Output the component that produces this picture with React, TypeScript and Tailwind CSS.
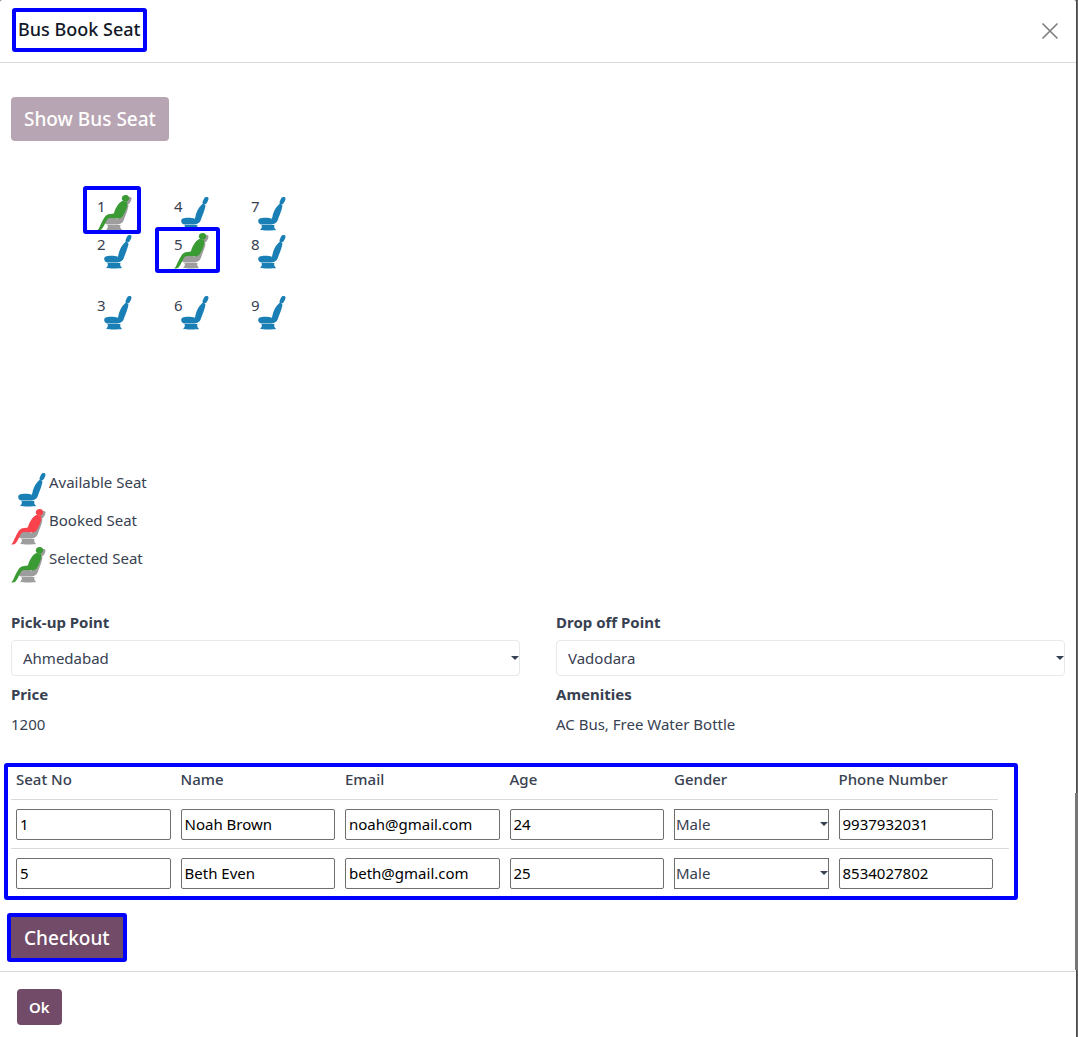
import type { ReactNode } from "react";

type SeatState = "available" | "booked" | "selected";

const passengerColor = { booked: "#f9424c", selected: "#3a9b35" };

function SeatIcon({ state }: { state: SeatState }) {
  const seat = state === "available" ? "#1a7fb5" : "#9d9d9d";
  return (
    <svg viewBox="0 0 36 36" className="size-9 shrink-0" aria-hidden="true">
      <g fill={seat}>
        <path d="M30.300 3.200C31.200 1.600 34.800 1.500 34.500 4c-.2 1.600-1.400 3.600-2.300 4.700-1 1.200-4 .5-3.700-1 .2-1.400 1.100-3.300 1.800-4.500z" />
        <path d="M27.900 9.500c.9-.9 3.500-.2 3.500 1.200 0 2.500-2.700 9.200-4.600 14.200-.8 2.200-2 3.500-4.200 3-2.100-.4-2.300-1.900-1.700-3.900.5-1.800.7-3.500 1.400-5.700 1.100-3.600 3.400-6.700 5.600-8.800z" />
        <path d="M7.200 25.500c.1-1.700 1.700-2.400 3.800-2.600 3.400-.3 7.300-.2 9.600.6.300 1.900 1.600 3.200 4 4.300-1.400 1.600-3.600 1.700-6 1.700h-7.600c-2.700 0-4-1.900-3.800-4z" />
        <path d="M10.500 30h13c-.9 2 .1 3.700 1.700 5-2.300.6-13.500.7-16.200 0 1.500-1.400 2.400-3 1.500-5z" />
      </g>
      {state !== "available" && (
        <g fill={passengerColor[state]}>
          <path d="M24.800 3.200C25 1 27-.1 29 .1c2.100.2 3.400 1.600 3.200 3.400-.2 2-1.700 3.300-3.600 3.200-2.100 0-4-1.400-3.800-3.500z" />
          <path d="M24.800 6.200c1.800-.9 5.400.3 5.600 2.300.3 3.300-2.800 9.900-4.900 13-1.100 1.600-3.300 2.100-5.600 1.800l-6.600-.3c-2.300.2-3.200 1.500-4.200 3.500-1.400 2.800-2.700 5.800-4.700 7.900-.9.900-3.500 1.400-4 .9 2.100-1.700 2.500-5 4.500-8.300 1.700-2.800 2.600-5.600 4.900-6.900 2.300-1.300 5-1 7-1.500 1.400-4.600 3.800-9.900 8-12.400z" />
        </g>
      )}
    </svg>
  );
}

/* Highlight frame drawn over the element it marks. */
function Frame({ className }: { className: string }) {
  return (
    <span
      aria-hidden="true"
      className={`pointer-events-none absolute z-10 rounded-[3px] border-4 border-[#0000ff] ${className}`}
    />
  );
}

function Seat({ no, state = "available", children }: { no: number; state?: SeatState; children?: ReactNode }) {
  return (
    <div className="relative h-9 w-9">
      <button type="button" aria-label={`Seat ${no}, ${state}`} className="relative block">
        <SeatIcon state={state} />
        <span className="absolute top-0 left-0">{no}</span>
      </button>
      {children}
    </div>
  );
}

function Caret({ className }: { className: string }) {
  return (
    <svg viewBox="0 0 8 4" className={`pointer-events-none absolute h-1 w-2 ${className}`} aria-hidden="true">
      <path d="M0 0h8L4 4z" fill="#374151" />
    </svg>
  );
}

function PointSelect({ id, label, value }: { id: string; label: string; value: string }) {
  return (
    <div>
      <label htmlFor={id} className="block font-bold">
        {label}
      </label>
      <div className="relative mt-[7px]">
        <select
          id={id}
          defaultValue={value}
          className="block h-9 w-full appearance-none rounded border border-[#e7e9ed] bg-white px-[11px]"
        >
          <option>{value}</option>
        </select>
        <Caret className="top-4 right-px" />
      </div>
    </div>
  );
}

function Info({ label, value }: { label: string; value: string }) {
  return (
    <div>
      <p className="font-bold">{label}</p>
      <p className="mt-2">{value}</p>
    </div>
  );
}

const columns = ["Seat No", "Name", "Email", "Age", "Gender", "Phone Number"];
const passengers = [
  ["1", "Noah Brown", "noah@gmail.com", "24", "Male", "9937932031"],
  ["5", "Beth Even", "beth@gmail.com", "25", "Male", "8534027802"],
];

function PassengerTable() {
  return (
    <div className="relative mt-[29px] mr-14">
      <table className="w-full table-fixed border-separate border-spacing-0 text-left">
        <thead>
          <tr>
            {columns.map((c) => (
              <th key={c} scope="col" className="h-9 border-b border-[#d8dadd] px-[5px] pb-1.5 font-medium">
                {c}
              </th>
            ))}
            <td className="w-[11px]" />
          </tr>
        </thead>
        <tbody className="[&>tr:first-child>td]:border-b">
          {passengers.map((row) => (
            <tr key={row[0]}>
              {row.map((value, i) => (
                <td key={columns[i]} className="border-[#d8dadd] px-[5px] pt-[9px] pb-2">
                  {columns[i] === "Gender" ? (
                    <div className="relative">
                      <select
                        aria-label={`Gender, seat ${row[0]}`}
                        defaultValue={value}
                        className="block h-[31px] w-full appearance-none border border-[#6f6f6f] bg-white px-px pb-0.5"
                      >
                        <option>Male</option>
                        <option>Female</option>
                      </select>
                      <Caret className="top-[13px] right-px" />
                    </div>
                  ) : (
                    <input
                      aria-label={`${columns[i]}, seat ${row[0]}`}
                      defaultValue={value}
                      className="block h-[31px] w-full rounded-[2px] border border-[#6f6f6f] px-[3px] pb-0.5 text-black"
                    />
                  )}
                </td>
              ))}
              <td className="border-[#d8dadd]" />
            </tr>
          ))}
        </tbody>
      </table>
      <Frame className="-top-px -right-[9px] -bottom-[3px] -left-[7px]" />
    </div>
  );
}

export default function App() {
  return (
    <div className="relative flex min-h-screen bg-[#666666] font-['Noto_Sans',sans-serif] text-[15px] leading-[22px] text-[#374151]">
      <div className="mr-0.5 flex grow flex-col rounded-t-[2px] bg-white">
        <header className="flex h-[63px] items-center justify-between border-b border-[#d8dadd] pr-[18px] pl-3">
          <h1 className="relative -mt-0.5 flex h-11 items-center pr-[7px] pb-0.5 pl-1.5 text-[18px] font-medium text-[#111827]">
            Bus Book Seat
            <Frame className="inset-0" />
          </h1>
          <button type="button" aria-label="Close">
            <svg viewBox="0 0 16 16" className="size-4" aria-hidden="true">
              <path d="M1 1l14 14M15 1L1 15" stroke="#808080" strokeWidth="1.700" strokeLinecap="round" />
            </svg>
          </button>
        </header>

        <main className="px-[11px] pt-[34px] pb-3">
          <button type="button" className="block h-11 rounded bg-[#b8a5b3] px-[13px] text-[19px] font-medium text-white">
            Show Bus Seat
          </button>

          <div className="mt-[54px] ml-[86px] flex gap-[41px]">
            <div className="flex flex-col gap-0.5">
              <Seat no={1} state="selected">
                <Frame className="-top-[9px] -right-2 -bottom-[3px] -left-3.5" />
              </Seat>
              <Seat no={2} />
              <div className="mt-[23px]">
                <Seat no={3} />
              </div>
            </div>
            <div className="flex flex-col gap-0.5">
              <Seat no={4} />
              <Seat no={5} state="selected">
                <Frame className="-top-1.5 -right-2.5 -bottom-1 -left-[19px]" />
              </Seat>
              <div className="mt-[23px]">
                <Seat no={6} />
              </div>
            </div>
            <div className="flex flex-col gap-0.5">
              <Seat no={7} />
              <Seat no={8} />
              <div className="mt-[23px]">
                <Seat no={9} />
              </div>
            </div>
          </div>

          <ul className="mt-[141px] flex flex-col gap-0.5">
            <li className="flex gap-0.5">
              <SeatIcon state="available" />
              Available Seat
            </li>
            <li className="flex gap-0.5">
              <SeatIcon state="booked" />
              Booked Seat
            </li>
            <li className="flex gap-0.5">
              <SeatIcon state="selected" />
              Selected Seat
            </li>
          </ul>

          <div className="mt-7 grid grid-cols-2 gap-x-9 gap-y-[7px]">
            <PointSelect id="pickup" label="Pick-up Point" value="Ahmedabad" />
            <PointSelect id="dropoff" label="Drop off Point" value="Vadodara" />
            <Info label="Price" value="1200" />
            <Info label="Amenities" value="AC Bus, Free Water Bottle" />
          </div>

          <PassengerTable />

          <div className="relative mt-[18px] w-fit">
            <button type="button" className="block h-11 bg-[#714b67] px-[13px] pt-0.5 text-[19px] font-medium text-white">
              Checkout
            </button>
            <Frame className="-inset-x-1 -top-0.5 -bottom-[3px]" />
          </div>
        </main>

        <footer className="grow border-t border-[#d8dadd] px-[17px] pt-[17px] pb-3">
          <button type="button" className="block h-9 rounded bg-[#714b67] px-3 font-semibold text-white">
            Ok
          </button>
        </footer>
      </div>
      <span aria-hidden="true" className="absolute top-0 right-px h-full w-px bg-[#4a4a4a]" />
      <span aria-hidden="true" className="absolute right-0 bottom-[67px] h-[177px] w-[3px] bg-[#777777]" />
    </div>
  );
}
